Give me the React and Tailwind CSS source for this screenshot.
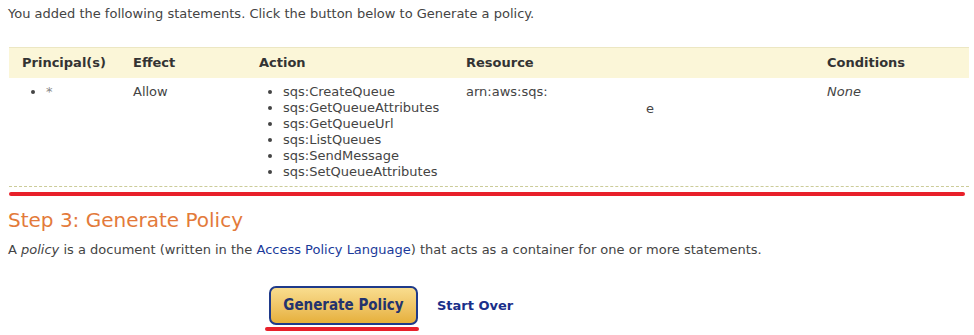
export default function App() {
  const actions = [
    "sqs:CreateQueue",
    "sqs:GetQueueAttributes",
    "sqs:GetQueueUrl",
    "sqs:ListQueues",
    "sqs:SendMessage",
    "sqs:SetQueueAttributes",
  ];

  return (
    <div
      className="w-[974px] h-[335px] bg-white text-[13px] text-[#444] overflow-hidden"
      style={{ fontFamily: "'DejaVu Sans', Verdana, sans-serif" }}
    >
      <p className="pl-[8px] pt-[5px] leading-[18px]">
        You added the following statements. Click the button below to Generate a policy.
      </p>

      <div className="ml-[9px] mr-[5px] mt-[24px]">
        <div className="grid grid-cols-[111px_126px_207px_361px_1fr] bg-[#fbf6d8] border-t border-[#ece7c3] h-[31px] items-center pl-[13px] font-bold text-[#333]">
          <div>Principal(s)</div>
          <div>Effect</div>
          <div>Action</div>
          <div>Resource</div>
          <div>Conditions</div>
        </div>
        <div className="grid grid-cols-[111px_126px_207px_361px_1fr] pl-[13px] pt-[6px] pb-[6px] leading-[16px] border-b border-dashed border-[#cccc99]">
          <div>
            <ul className="list-disc pl-[24px]">
              <li>
                <span className="text-[#888]">*</span>
              </li>
            </ul>
          </div>
          <div>Allow</div>
          <div>
            <ul className="list-disc pl-[24px]">
              {actions.map((a) => (
                <li key={a}>{a}</li>
              ))}
            </ul>
          </div>
          <div>
            <div>arn:aws:sqs:</div>
            <div className="pl-[180px] pt-[1px]">e</div>
          </div>
          <div className="italic">None</div>
        </div>
      </div>

      <div className="ml-[9px] mr-[9px] mt-[5px] h-[4px] rounded-full bg-[#e8202a]" />

      <h2 className="pl-[8px] mt-[11px] text-[20px] leading-[26px] text-[#e37a3a]">
        Step 3: Generate Policy
      </h2>
      <p className="pl-[8px] mt-[8px] leading-[18px]">
        A <em>policy</em> is a document (written in the{" "}
        <span className="text-[#1a3a9a]">Access Policy Language</span>) that acts as a container
        for one or more statements.
      </p>

      <div className="flex items-center pl-[265px] mt-[27px]">
        <div className="flex flex-col items-center">
          <button
            className="ml-[4px] mr-[1px] w-[149px] h-[39px] rounded-[7px] border-2 border-[#1f3a8a] bg-gradient-to-b from-[#f9dd8e] to-[#e6b03a] text-[15px] font-bold text-[#23336e]"
            style={{ fontFamily: "'DejaVu Sans Condensed', 'DejaVu Sans', sans-serif" }}
          >
            Generate Policy
          </button>
          <div className="w-[154px] h-[4px] mt-[2px] rounded-full bg-[#e8202a]" />
        </div>
        <a className="ml-[18px] mb-[6px] font-bold text-[#1a2f8a] text-[13px]">Start Over</a>
      </div>
    </div>
  );
}
